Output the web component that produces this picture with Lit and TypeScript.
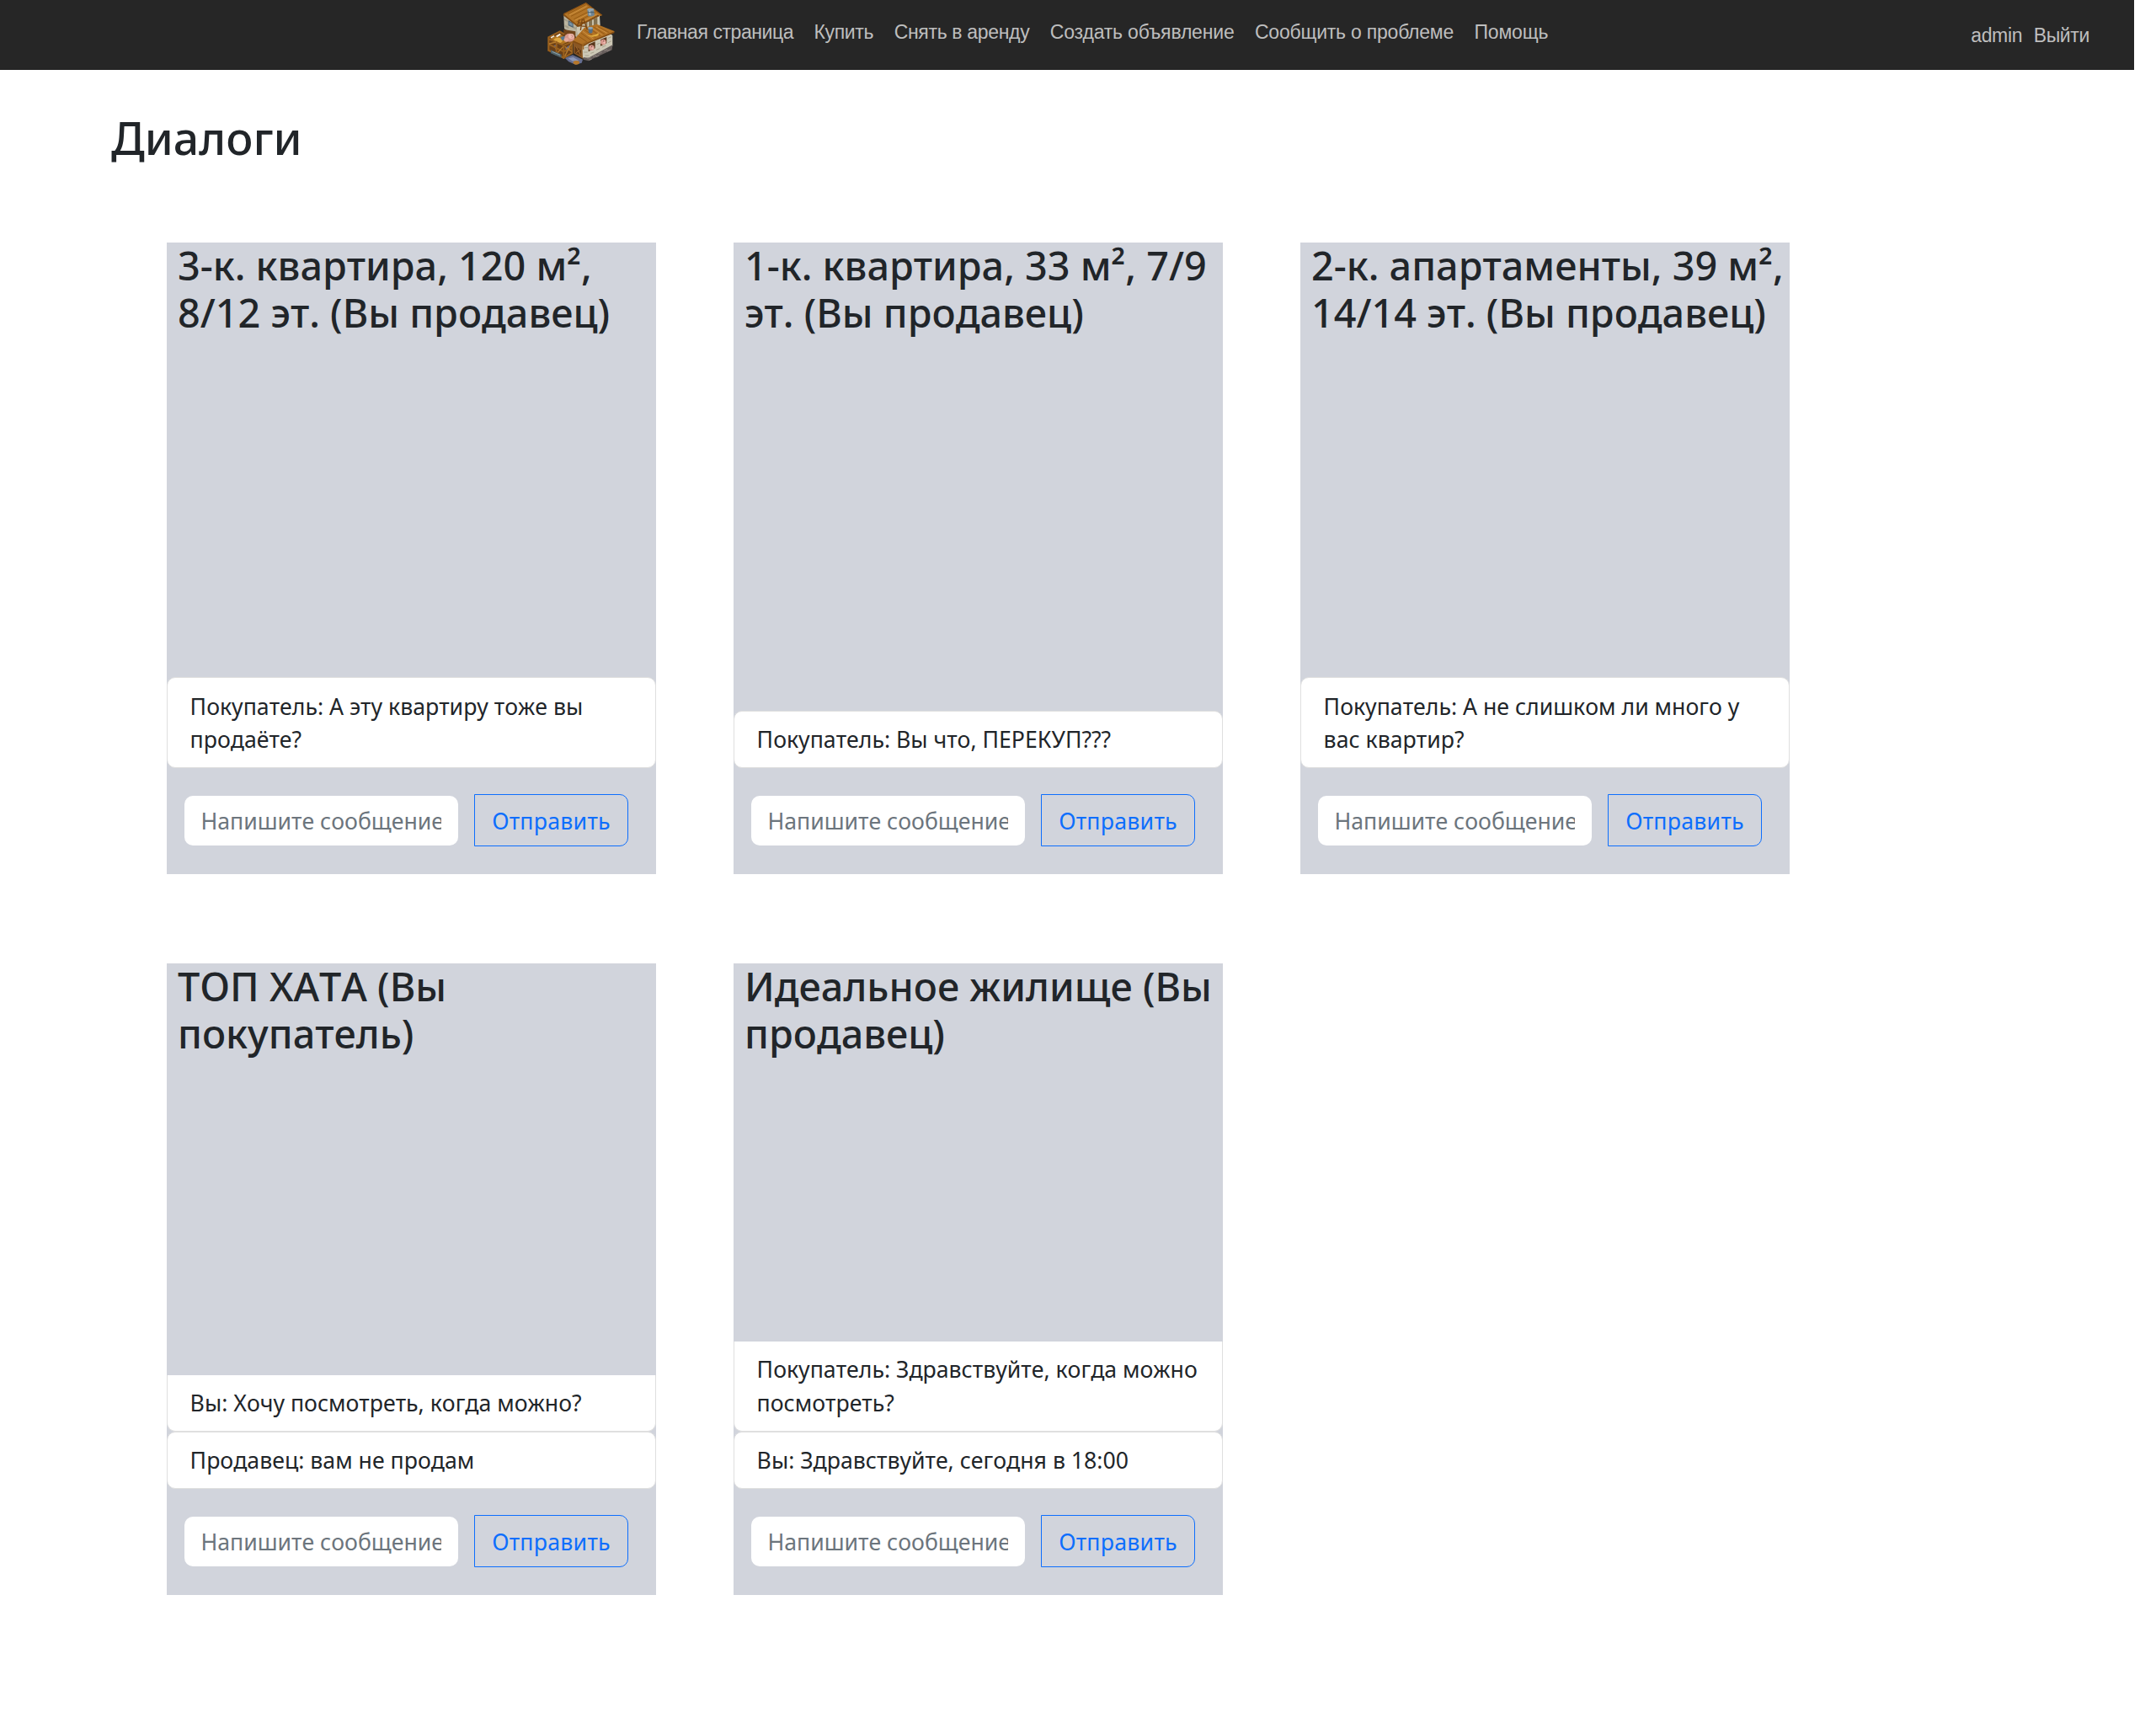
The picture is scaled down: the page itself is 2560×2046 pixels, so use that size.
import { LitElement, html, css, svg } from "lit";
import { customElement, property } from "lit/decorators.js";

interface NavItem {
  label: string;
  tracking: number;
}

interface Dialog {
  title: string;
  messages: string[];
}

const NAV: NavItem[] = [
  { label: "Главная страница", tracking: -0.44 },
  { label: "Купить", tracking: -0.35 },
  { label: "Снять в аренду", tracking: -0.33 },
  { label: "Создать объявление", tracking: -0.19 },
  { label: "Сообщить о проблеме", tracking: -0.22 },
  { label: "Помощь", tracking: -0.2 },
];

const DIALOGS: Dialog[] = [
  {
    title: "3-к. квартира, 120 м²,\n8/12 эт. (Вы продавец)",
    messages: ["Покупатель: А эту квартиру тоже вы\nпродаёте?"],
  },
  {
    title: "1-к. квартира, 33 м², 7/9\nэт. (Вы продавец)",
    messages: ["Покупатель: Вы что, ПЕРЕКУП???"],
  },
  {
    title: "2-к. апартаменты, 39 м²,\n14/14 эт. (Вы продавец)",
    messages: ["Покупатель: А не слишком ли много у\nвас квартир?"],
  },
  {
    title: "ТОП ХАТА (Вы\nпокупатель)",
    messages: ["Вы: Хочу посмотреть, когда можно?", "Продавец: вам не продам"],
  },
  {
    title: "Идеальное жилище (Вы\nпродавец)",
    messages: [
      "Покупатель: Здравствуйте, когда можно\nпосмотреть?",
      "Вы: Здравствуйте, сегодня в 18:00",
    ],
  },
];

const pig = (x: number, y: number, r: number) => svg`
  <ellipse cx=${x} cy=${y} rx=${r} ry=${r * 0.95} fill="#d99a90"/>
  <ellipse cx=${x + r * 0.4} cy=${y + r * 0.2} rx=${r * 0.4} ry=${r * 0.32} fill="#efbcb2"/>
  <circle cx=${x + r * 0.1} cy=${y - r * 0.35} r="1.6" fill="#5b2c28"/>`;

@customElement("farm-logo")
export class FarmLogo extends LitElement {
  static styles = css`
    :host {
      display: block;
      width: 80px;
      height: 76px;
    }
    .art {
      display: block;
      width: 100%;
      height: 100%;
    }
  `;
  render() {
    return html`<svg class="art" viewBox="60 6 240 228">
      <!-- puddle -->
      <path d="M122 206 L150 196 L186 212 L182 224 L160 230 L136 220Z" fill="#666e90"/>
      <path d="M134 208 L152 204 L172 216 L150 218Z" fill="#8d98b8"/>
      <ellipse cx="163" cy="223" rx="11" ry="7" fill="#b5772b"/>
      <!-- tower walls -->
      <path d="M118 54 L164 88 L166 134 L120 102Z" fill="#bab49f"/>
      <path d="M164 88 L246 56 L248 90 L200 112 L166 130Z" fill="#ccc6b1"/>
      <path d="M120 66 L132 72 V78 L120 72Z M122 88 L136 96 V102 L122 95Z M150 92 L162 98 V106 L150 100Z" fill="#a49d88"/>
      <path d="M134 72 L152 82 V99 L134 91Z" fill="#4d6170"/>
      <path d="M137 77 L149 84 V94 L137 88Z" fill="#7892a2"/>
      <path d="M196 78 L238 62 V86 L196 104Z" fill="#82704f"/>
      <path d="M205 76 V100 M222 70 V94" stroke="#d5cfba" stroke-width="5"/>
      <!-- tower roof -->
      <path d="M118 50 L197 10 L255 54 L246 58 L240 54 L168 94Z" fill="#b37527"/>
      <path d="M132 50 L197 17 M144 58 L210 25 M154 68 L222 34 M164 78 L232 43" stroke="#91570f" stroke-width="2.5"/>
      <path d="M138 54 L200 22 M158 73 L226 39 M168 86 L236 51" stroke="#cf9240" stroke-width="3"/>
      <path d="M117 52 L168 93 L242 56" fill="none" stroke="#854d12" stroke-width="5"/>
      <path d="M118 50 L197 11 L254 55" fill="none" stroke="#8e5314" stroke-width="4"/>
      <!-- pail on tower roof -->
      <path d="M202 34 L225 34 L228 54 Q216 62 204 56Z" fill="#6f8492"/>
      <path d="M207 36 L213 36 L215 55 L209 54Z" fill="#a8bac4"/>
      <ellipse cx="214" cy="34" rx="12" ry="5" fill="#91a5b1"/>
      <path d="M204 44 H226" stroke="#40535f" stroke-width="2.5"/>
      <!-- passage behind the pen -->
      <path d="M118 105 L160 112 L160 160 L118 145Z" fill="#70431a"/>
      <!-- house walls -->
      <path d="M152 146 L188 160 L188 210 L154 190Z" fill="#8a5724"/>
      <path d="M158 166 L180 178 V198 L158 188Z" fill="#603713"/>
      <path d="M162 166 L178 195 M178 176 L162 188" stroke="#a46b2d" stroke-width="3"/>
      <path d="M184 156 L280 118 L292 126 L292 164 L206 208 L186 206Z" fill="#cdc8b6"/>
      <path d="M192 170 H204 M190 186 H203 M194 198 H208 M236 158 L246 154 M234 178 L246 173 M276 136 L288 131 M276 152 L288 146 M214 190 L226 186 M255 168 L268 162" stroke="#a7a18d" stroke-width="3"/>
      <path d="M188 204 L206 206 L292 160 L290 178 L206 217 L188 212Z" fill="#675e5c"/>
      <path d="M202 208 L214 205 M222 202 L234 197 M242 192 L254 186 M262 181 L274 176 M208 214 L218 210 M232 203 L244 198 M272 183 L284 177" stroke="#857b77" stroke-width="4"/>
      <path d="M206 158 L230 148 V172 L206 184Z M249 141 L271 132 V154 L249 164Z" fill="#59361b"/>
      ${pig(217, 170, 10)} ${pig(259, 150, 10)}
      <!-- house roof -->
      <path d="M150 146 L192 98 L236 86 L300 112 L286 120 L206 152 L188 163Z" fill="#b07125"/>
      <path d="M180 118 L216 144 M192 106 L232 134 M208 100 L248 128 M224 96 L264 122 M240 95 L280 116 M170 128 L202 150" stroke="#8f5511" stroke-width="2.5"/>
      <path d="M186 112 L224 139 M216 98 L256 125 M234 96 L272 118" stroke="#cd8f40" stroke-width="3"/>
      <path d="M150 146 L188 163 L206 152 L298 115" fill="none" stroke="#824b12" stroke-width="5"/>
      <path d="M188 176 L186 158 L202 150" fill="none" stroke="#9d6420" stroke-width="5"/>
      <path d="M198 124 Q222 132 242 118 Q246 128 230 130 Q212 134 198 124Z" fill="#e0ac3e"/>
      <path d="M205 100 L222 100 L220 116 Q213 121 207 116Z" fill="#536f87"/>
      <ellipse cx="213" cy="100" rx="9" ry="4" fill="#91a9ba"/>
      <!-- ladder -->
      <path d="M174 70 L166 94 M188 66 L202 106 M170 82 L192 80 M168 92 L198 94 M184 68 L178 108" stroke="#794511" stroke-width="4" fill="none"/>
      <!-- animal pen -->
      <path d="M62 134 L104 112 L150 146 L150 190 L118 210 L62 182Z" fill="#6a3f17"/>
      <path d="M70 138 L104 120 L140 146 L112 158Z" fill="#b07421"/>
      <path d="M80 144 Q92 128 110 138 Q120 144 108 152 Q94 156 80 144Z" fill="#dca53f"/>
      <path d="M72 134 L84 127 M92 130 L106 122" stroke="#f2eee4" stroke-width="6"/>
      <path d="M106 132 L122 128 L124 142 L112 144Z" fill="#567790"/>
      <path d="M82 162 L94 160 L90 178Z M124 172 L140 160 L128 186Z" fill="#6c7295"/>
      <path d="M62 138 L118 162 L150 148 M62 156 L118 184 L150 168 M62 178 L118 206 L150 188 M64 132 V182 M92 146 V198 M118 158 V210 M148 146 V190 M62 134 L104 112 L120 122" fill="none" stroke="#99601d" stroke-width="6"/>
      <path d="M66 156 L90 150 M96 188 L116 166 M122 200 L146 154 M122 166 L146 184" stroke="#b67b2e" stroke-width="4"/>
      <path d="M72 178 L110 194 V206 L72 190Z" fill="#4f626a"/>
      <path d="M77 184 L105 196" stroke="#91a4a9" stroke-width="3"/>
      <!-- large pig -->
      <ellipse cx="139" cy="134" rx="18" ry="15" fill="#d6988c"/>
      <ellipse cx="145" cy="129" rx="10" ry="9" fill="#efbbae"/>
      <ellipse cx="127" cy="142" rx="8" ry="7" fill="#e4a89c"/>
      <path d="M143 124 L151 128 L146 135" fill="none" stroke="#b26f68" stroke-width="2"/>
    </svg>`;
  }
}

@customElement("dialog-card")
export class DialogCard extends LitElement {
  @property({ attribute: false }) dialog!: Dialog;

  static styles = css`
    :host {
      display: flex;
      flex-direction: column;
      box-sizing: border-box;
      height: 750px;
      background: #d1d4dc;
      color: #212529;
    }
    .title {
      margin: -1px 0 0;
      padding-left: 13px;
      font-size: 46.75px;
      font-weight: 500;
      line-height: 56px;
      white-space: pre;
    }
    .messages {
      margin: auto 0 0;
      padding: 0;
      list-style: none;
    }
    .message {
      padding: 13.2px 26.6px 13.8px;
      border: 1px solid #dfdfdf;
      border-radius: 10px;
      background: #fff;
      white-space: pre;
      line-height: 39.3px;
    }
    .message:first-child:not(:last-child) {
      padding-top: 13px;
      border-top: 0;
      border-radius: 0 0 10px 10px;
    }
    .form {
      display: flex;
      align-items: center;
      gap: 19px;
      padding: 31px 33px 33px 21px;
    }
    .field {
      box-sizing: border-box;
      width: 325px;
      height: 59px;
      padding: 0 20px 0 19.4px;
      border: 0;
      border-radius: 10px;
      background: #fff;
      font: inherit;
      font-kerning: none;
      color: #212529;
    }
    .field::placeholder {
      color: #6c757d;
      opacity: 1;
    }
    .send {
      box-sizing: border-box;
      width: 183px;
      height: 62px;
      padding: 1px 0 0;
      border: 1px solid #0d6efd;
      border-radius: 0 10px 10px 0;
      background: none;
      color: #0d6efd;
      font: inherit;
      font-kerning: none;
      letter-spacing: 0.25px;
    }
  `;

  render() {
    return html`
      <h2 class="title">${this.dialog.title}</h2>
      <ul class="messages">
        ${this.dialog.messages.map((text) => html`<li class="message">${text}</li>`)}
      </ul>
      <div class="form">
        <input class="field" placeholder="Напишите сообщение" />
        <button class="send">Отправить</button>
      </div>
    `;
  }
}

@customElement("app-root")
export class AppRoot extends LitElement {
  static styles = css`
    :host {
      display: block;
      height: 2046px;
      overflow: hidden;
      background: #fff;
      color: #212529;
      font: 26.67px/40px "Noto Sans", sans-serif;
      font-kerning: none;
    }
    .bar {
      display: flex;
      box-sizing: border-box;
      width: 2534px;
      height: 83px;
      padding: 2px 53px 0 650px;
      background: #262626;
      border-bottom: 1px solid #212121;
      font: 23px/40px "Liberation Sans", sans-serif;
      font-kerning: auto;
      color: #bebebe;
    }
    .links {
      display: flex;
      gap: 24.5px;
      padding: 16px 0 0 26px;
    }
    .user {
      display: flex;
      gap: 13.5px;
      margin-left: auto;
      padding-top: 20px;
      letter-spacing: -0.35px;
    }
    .page {
      padding: 49px 0 0 132px;
    }
    .heading {
      margin: 0;
      font-size: 53.5px;
      font-weight: 500;
      line-height: 64px;
    }
    .grid {
      display: grid;
      grid-template-columns: repeat(3, 581px);
      gap: 106px 92px;
      padding: 92px 0 0 66px;
    }
  `;

  render() {
    return html`
      <header class="bar">
        <farm-logo></farm-logo>
        <nav class="links">
          ${NAV.map((i) => html`<span style="letter-spacing:${i.tracking}px">${i.label}</span>`)}
        </nav>
        <div class="user"><span>admin</span><span>Выйти</span></div>
      </header>
      <main class="page">
        <h1 class="heading">Диалоги</h1>
        <section class="grid">
          ${DIALOGS.map((d) => html`<dialog-card .dialog=${d}></dialog-card>`)}
        </section>
      </main>
    `;
  }
}
